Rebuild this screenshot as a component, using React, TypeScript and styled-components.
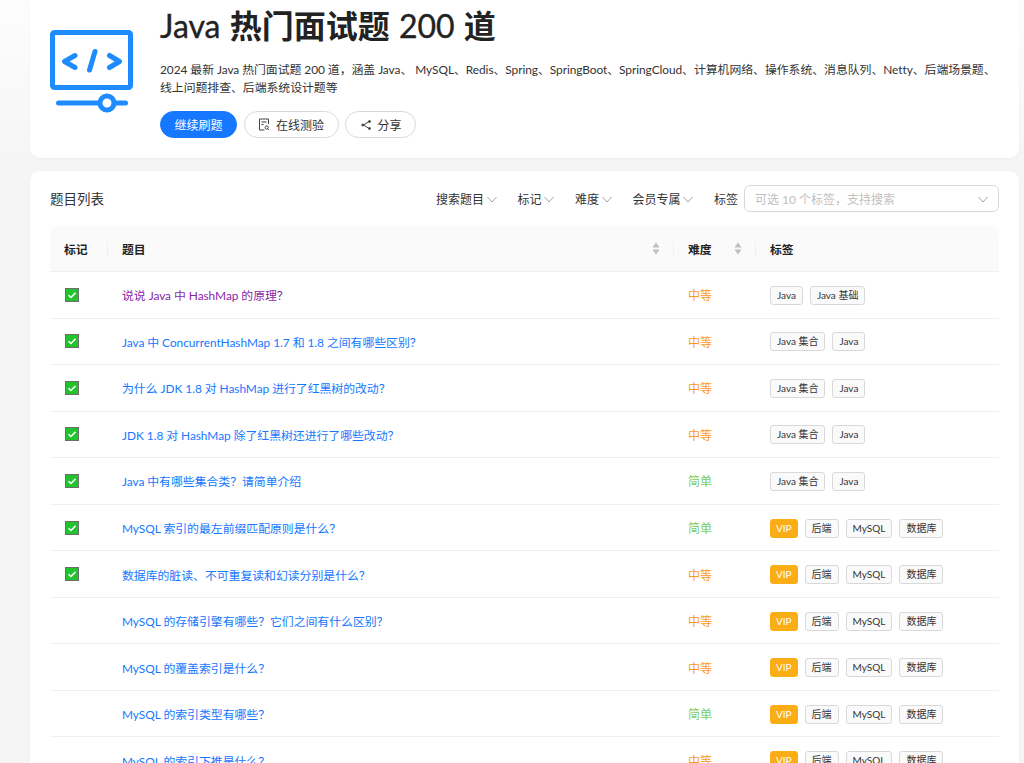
import React from "react";
import styled, { createGlobalStyle } from "styled-components";

const FONT = `Lato, "Noto Sans CJK SC", sans-serif`;

const Global = createGlobalStyle`
  html, body { margin: 0; padding: 0; height: 763px; overflow: hidden; background: #f5f5f5; }
  body { font-family: ${FONT}; color: rgba(0,0,0,.88); }
  * { box-sizing: border-box; }
`;
const Page = styled.div`
  width: 1024px; height: 763px; overflow: hidden;
  padding: 0 5px 0 30px;
  display: flex; flex-direction: column; gap: 13px;
  background: linear-gradient(#fdfdfd 0, #f5f5f5 165px);
`;
const Card = styled.section`
  background: #fff;
  border-radius: 0 0 10px 10px;
  box-shadow: 0 1px 3px rgba(0,0,0,.03);
`;
const Hero = styled(Card)`
  height: 158px; flex: none;
  display: flex; gap: 26px;
  padding: 0 20px;
`;
const Logo = styled.svg`
  width: 84px; height: 84px; flex: none; margin-top: 29px;
`;
const HeroBody = styled.div` flex: 1; min-width: 0; `;
const Title = styled.h1`
  margin: 5px 0 0; font-size: 32px; line-height: 42px; font-weight: 400;
  word-spacing: 1px; color: #222;
  -webkit-text-stroke: 0.35px #222;
  b { font-weight: 700; -webkit-text-stroke: 0; }
`;
const Desc = styled.p`
  margin: 14px 0 0; font-size: 11.9px; line-height: 18px; color: #333; letter-spacing: -0.06px;
`;
const Actions = styled.div`
  display: flex; gap: 6.5px; margin-top: 14px;
`;
const Pill = styled.button<{ $primary?: boolean }>`
  height: 27px; padding: 0 13.5px; border-radius: 14px;
  display: inline-flex; align-items: center; gap: 6px;
  font: 12px ${FONT};
  background: ${p => (p.$primary ? "#1677ff" : "#fff")};
  color: ${p => (p.$primary ? "#fff" : "#333")};
  border: 1px solid ${p => (p.$primary ? "#1677ff" : "#d9d9d9")};
`;
const ListCard = styled(Card)`
  flex: 1; border-radius: 10px 10px 0 0; padding: 0 20px; min-height: 0; overflow: hidden;
`;
const Toolbar = styled.div`
  height: 55px; display: flex; align-items: center;
`;
const ListTitle = styled.h2`
  margin: 0 auto 2px 0; font-size: 13.5px; font-weight: 400; color: #333;
`;
const Filter = styled.div`
  display: inline-flex; align-items: center; gap: 3px; font-size: 12px; color: #333; margin-right: 20.5px;
`;
const FilterLabel = styled.span` font-size: 12px; color: #333; margin-right: 6px; `;
const Select = styled.div`
  width: 255px; height: 27px; border: 1px solid #d9d9d9; border-radius: 6px;
  display: flex; align-items: center; justify-content: space-between;
  padding: 0 10px; font-size: 12px; color: #bfbfbf;
`;
const columns = "58px 566px 82px 242px";
const Head = styled.div`
  display: grid; grid-template-columns: ${columns}; height: 46px;
  background: #fafafa; border-bottom: 1px solid #f0f0f0; border-radius: 8px 8px 0 0;
`;
const HeadCell = styled.div<{ $divider?: boolean }>`
  position: relative; display: flex; align-items: center; justify-content: space-between;
  padding: 0 14px; font-size: 11.8px; font-weight: 700; color: #222;
  ${p => p.$divider ? `&::after { content: ""; position: absolute; right: 0; top: 15px; height: 16px; width: 1px; background: #f0f0f0; }` : ""}
`;
const Row = styled.div`
  display: grid; grid-template-columns: ${columns}; height: 46.55px;
  border-bottom: 1px solid #f0f0f0; align-items: center;
`;
const Cell = styled.div`
  padding: 0 14px; font-size: 11.9px; display: flex; align-items: center; min-width: 0;
`;
const Link = styled.a<{ $visited?: boolean }>`
  color: ${p => (p.$visited ? "#8a1fa8" : "#1677ff")}; text-decoration: none; white-space: nowrap; letter-spacing: -0.05px;
`;
const Level = styled.span<{ $easy?: boolean }>`
  color: ${p => (p.$easy ? "#7ccb5e" : "#fa9a1c")}; font-size: 12px;
`;
const Tags = styled.div` display: flex; gap: 7px; padding-top: 1px; `;
const Tag = styled.span<{ $vip?: boolean }>`
  height: 19px; padding: 0 ${p => (p.$vip ? 5 : 6)}px; border-radius: 3px; font-size: 10px; line-height: 17px;
  background: ${p => (p.$vip ? "#faad14" : "#fafafa")};
  color: ${p => (p.$vip ? "#fff" : "#333")};
  border: 1px solid ${p => (p.$vip ? "#faad14" : "#d9d9d9")};
`;
const CheckBox = styled.svg` width: 14px; height: 14px; margin-left: 1px; `;

const Chevron = () => (
  <svg width="10" height="10" viewBox="0 0 10 10" fill="none" stroke="#999" strokeWidth="0.9"><path d="M0.5 3l4.5 5 4.5-5" /></svg>
);
const Sorter = () => (
  <svg width="8" height="13" viewBox="0 0 8 13" fill="#bfbfbf"><path d="M4 0.5l3.5 5h-7zM4 12.5l-3.5-5h7z" /></svg>
);
const Check = () => (
  <CheckBox viewBox="0 0 14 14"><rect x="0.5" y="0.5" width="13" height="13" fill="#22c42e" stroke="#6e6e6e" /><path d="M3.5 7.2l2.4 2.3 4.6-4.6" fill="none" stroke="#fff" strokeWidth="1.5" /></CheckBox>
);
const BookIcon = () => (
  <svg width="12" height="13" viewBox="0 0 12 13" fill="none" stroke="#444" strokeWidth="1"><path d="M10.5 6V1H1.5v11h5M3.5 4h5M3.5 6.5h2" /><circle cx="8.7" cy="9.5" r="1.6" /><path d="M9.8 10.8l1 1" /></svg>
);
const ShareIcon = () => (
  <svg width="12" height="12" viewBox="0 0 12 12" fill="none" stroke="#444" strokeWidth="1"><path d="M9 2.5L3.5 6 9 9.5" /><circle cx="9.5" cy="2.5" r="1" fill="#444" /><circle cx="2.8" cy="6" r="1" fill="#444" /><circle cx="9.5" cy="9.5" r="1" fill="#444" /></svg>
);

const J = ["Java", "Java 基础"], K = ["Java 集合", "Java"], M = ["VIP", "后端", "MySQL", "数据库"];
const rows = [
  { t: "说说 Java 中 HashMap 的原理\uFF1F", easy: false, tags: J, done: true, visited: true },
  { t: "Java 中 ConcurrentHashMap 1.7 和 1.8 之间有哪些区别\uFF1F", easy: false, tags: K, done: true },
  { t: "为什么 JDK 1.8 对 HashMap 进行了红黑树的改动\uFF1F", easy: false, tags: K, done: true },
  { t: "JDK 1.8 对 HashMap 除了红黑树还进行了哪些改动\uFF1F", easy: false, tags: K, done: true },
  { t: "Java 中有哪些集合类\uFF1F请简单介绍", easy: true, tags: K, done: true },
  { t: "MySQL 索引的最左前缀匹配原则是什么\uFF1F", easy: true, tags: M, done: true },
  { t: "数据库的脏读、不可重复读和幻读分别是什么\uFF1F", easy: false, tags: M, done: true },
  { t: "MySQL 的存储引擎有哪些\uFF1F它们之间有什么区别\uFF1F", easy: false, tags: M },
  { t: "MySQL 的覆盖索引是什么\uFF1F", easy: false, tags: M },
  { t: "MySQL 的索引类型有哪些\uFF1F", easy: true, tags: M },
  { t: "MySQL 的索引下推是什么\uFF1F", easy: false, tags: M },
];
const descText = "2024 最新 Java 热门面试题 200 道\uFF0C涵盖 Java、 MySQL、Redis、Spring、SpringBoot、SpringCloud、计算机网络、操作系统、消息队列、Netty、后端场景题、线上问题排查、后端系统设计题等";
const placeholder = "可选 10 个标签\uFF0C支持搜索";

export default function App() {
  return (
    <Page>
      <Global />
      <Hero>
        <Logo viewBox="0 0 84 84" fill="none" stroke="#1e8cff" strokeLinecap="round" strokeLinejoin="round">
          <rect x="2.5" y="3.5" width="78" height="55" rx="2" strokeWidth="5" />
          <path d="M25 26.5l-10.5 6 10.5 6M59.5 26.5l10 6-10 6" strokeWidth="5" />
          <path d="M45 22.5l-5.5 18.5" strokeWidth="5" />
          <path d="M8.5 74h67" strokeWidth="5" />
          <circle cx="57" cy="74" r="7" strokeWidth="5" fill="#fff" />
        </Logo>
        <HeroBody>
          <Title>Java <b>热门面试题</b> 200 <b>道</b></Title>
          <Desc>{descText}</Desc>
          <Actions>
            <Pill $primary>继续刷题</Pill>
            <Pill><BookIcon />在线测验</Pill>
            <Pill><ShareIcon />分享</Pill>
          </Actions>
        </HeroBody>
      </Hero>
      <ListCard>
        <Toolbar>
          <ListTitle>题目列表</ListTitle>
          <Filter>搜索题目<Chevron /></Filter>
          <Filter>标记<Chevron /></Filter>
          <Filter>难度<Chevron /></Filter>
          <Filter>会员专属<Chevron /></Filter>
          <FilterLabel>标签</FilterLabel>
          <Select>{placeholder}<Chevron /></Select>
        </Toolbar>
        <Head>
          <HeadCell $divider>标记</HeadCell>
          <HeadCell $divider>题目<Sorter /></HeadCell>
          <HeadCell $divider>难度<Sorter /></HeadCell>
          <HeadCell>标签</HeadCell>
        </Head>
        {rows.map(r => (
          <Row key={r.t}>
            <Cell>{r.done && <Check />}</Cell>
            <Cell><Link href="#" $visited={r.visited}>{r.t}</Link></Cell>
            <Cell><Level $easy={r.easy}>{r.easy ? "简单" : "中等"}</Level></Cell>
            <Cell><Tags>{r.tags.map(t => <Tag key={t} $vip={t === "VIP"}>{t}</Tag>)}</Tags></Cell>
          </Row>
        ))}
      </ListCard>
    </Page>
  );
}
